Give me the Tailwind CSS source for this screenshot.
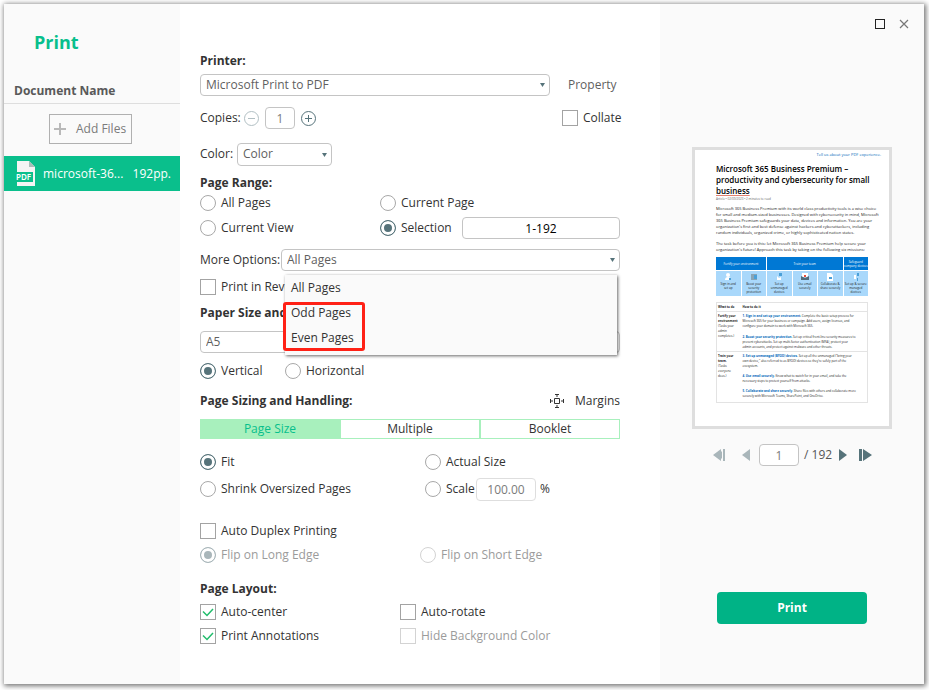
<!DOCTYPE html>
<html lang="en">
 <head>
  <meta charset="utf-8"/>
  <meta content="width=device-width, initial-scale=1.0" name="viewport"/>
  <title>
   Print
  </title>
  <script src="https://cdn.jsdelivr.net/npm/@tailwindcss/browser@4"></script>
 </head>
 <body class="min-h-screen flex bg-white pt-1 pl-1 pr-[5px] pb-[6px] font-['Open_Sans','Noto_Sans',sans-serif] text-xs text-[#333]">
  <div class="flex min-w-0 flex-1 bg-white shadow-[1px_1px_5px_1px_rgba(0,0,0,0.55)]">
   <!-- Documents -->
   <aside class="w-44 shrink-0 bg-[#fafafa]">
    <h1 class="pt-6 pl-[30px] text-lg leading-7 font-bold text-[#07bf8c]">
     Print
    </h1>
    <h2 class="mt-[29px] h-[18px] pl-[10px] leading-3 font-bold text-[#595959]">
     Document Name
    </h2>
    <div class="border-t border-[#dedede] pt-[10px] pb-3">
     <button class="ml-[45px] flex h-[30px] w-[83px] items-center gap-[10px] border border-[#b0b0b0] pl-1 whitespace-nowrap text-[#7b7b7b]">
      <svg class="size-3 shrink-0" fill="none" stroke="#b9b9b9" stroke-width="2" viewBox="0 0 12 12">
       <path d="M6 0v12M0 6h12"/>
      </svg>
      Add Files
     </button>
    </div>
    <div class="flex h-[35px] items-center bg-[#0abf8c] pr-[9px] pl-3 text-white">
     <svg class="h-[25px] w-[19px] shrink-0" viewBox="0 0 19 25">
      <path d="M1 0h12l6 6v19H1z" fill="#f4f4f4"/>
      <path d="M13 0l6 6h-6z" fill="#a9bdb8"/>
      <path d="M0 11h17v10H0z" fill="#0abf8c"/>
      <text fill="#fff" font-family="Noto Sans, sans-serif" font-size="8" font-weight="600" x="0" y="19">PDF</text>
     </svg>
     <span class="ml-2 flex-1">microsoft-36...</span>
     <span>192pp.</span>
    </div>
   </aside>
   <!-- Settings -->
   <main class="min-w-0 flex-1 pt-[47px] pr-10 pb-8 pl-5 whitespace-nowrap">
    <label class="block h-5 leading-5 font-bold" for="printer">
     Printer:
    </label>
    <div class="mt-[3px] flex h-[22px] items-center">
     <div class="relative mr-[18px] flex-1">
      <select class="block h-[22px] w-full appearance-none rounded border border-[#c4c4c4] bg-white pl-[5px] text-[#5f5f5f]" id="printer">
       <option>Microsoft Print to PDF</option>
      </select>
      <svg class="pointer-events-none absolute top-[9px] right-[5px] h-1 w-[5px]" fill="#56737a" viewBox="0 0 5 4">
       <path d="M0 0h5L2.500 4z"/>
      </svg>
     </div>
     <a class="w-[52px] text-[#5f5f5f]" href="#">Property</a>
    </div>
    <div class="mt-[10px] flex h-6 items-center">
     <label class="w-[44px]" for="copies">Copies:</label>
     <button aria-label="Fewer copies">
      <svg class="size-[15px]" fill="none" stroke="#b1bfc3" viewBox="0 0 15 15">
       <circle cx="7.500" cy="7.500" r="7"/>
       <path d="M4 7.500h7"/>
      </svg>
     </button>
     <input class="mx-[6px] h-[22px] w-[30px] rounded border border-[#c4c4c4] text-center text-[#7b7b7b]" id="copies" type="text" value="1"/>
     <button aria-label="More copies">
      <svg class="size-[15px]" fill="none" stroke="#56737a" viewBox="0 0 15 15">
       <circle cx="7.500" cy="7.500" r="7"/>
       <path d="M4 7.500h7M7.500 4v7"/>
      </svg>
     </button>
     <label class="ml-auto flex w-[58px] items-center gap-[5px]">
      <input class="size-4 shrink-0 appearance-none border border-[#a3a3a3] bg-white" type="checkbox"/>
      Collate
     </label>
    </div>
    <div class="mt-3 flex h-6 items-center">
     <label class="w-[37px]" for="color">Color:</label>
     <div class="relative">
      <select class="block h-[23px] w-[95px] appearance-none rounded border border-[#c4c4c4] bg-white pl-[5px] text-[#5f5f5f]" id="color">
       <option>Color</option>
      </select>
      <svg class="pointer-events-none absolute top-[10px] right-[5px] h-1 w-[5px]" fill="#56737a" viewBox="0 0 5 4">
       <path d="M0 0h5L2.500 4z"/>
      </svg>
     </div>
    </div>
    <h3 class="mt-[7px] h-5 leading-5 font-bold">
     Page Range:
    </h3>
    <div class="flex h-5 items-center">
     <label class="flex w-[180px] items-center gap-[5px]">
      <input class="size-4 appearance-none rounded-full border border-[#a8a8a8] bg-white" name="range" type="radio"/>
      All Pages
     </label>
     <label class="flex items-center gap-[5px]">
      <input class="size-4 appearance-none rounded-full border border-[#a8a8a8] bg-white" name="range" type="radio"/>
      Current Page
     </label>
    </div>
    <div class="mt-1 flex h-[22px] items-center">
     <label class="flex w-[180px] items-center gap-[5px]">
      <input class="size-4 appearance-none rounded-full border border-[#a8a8a8] bg-white" name="range" type="radio"/>
      Current View
     </label>
     <label class="flex w-[82px] items-center gap-[5px]">
      <input checked class="size-4 appearance-none rounded-full border border-[#a8a8a8] checked:border-[#56737a] checked:bg-[#56737a] checked:shadow-[inset_0_0_0_3px_#fff]" name="range" type="radio"/>
      Selection
     </label>
     <input aria-label="Selected pages" class="h-[22px] w-0 min-w-0 flex-1 rounded border border-[#c4c4c4] text-center text-black" type="text" value="1-192"/>
    </div>
    <div class="mt-[10px] flex h-[22px] items-center">
     <label class="w-[81px]" for="more">More Options:</label>
     <div class="relative flex-1">
      <select class="block h-[22px] w-full appearance-none rounded border border-[#c4c4c4] bg-white pl-[5px] text-[#5f5f5f]" id="more">
       <option>All Pages</option>
       <option>Odd Pages</option>
       <option>Even Pages</option>
      </select>
      <svg class="pointer-events-none absolute top-[9px] right-[5px] h-1 w-[5px]" fill="#56737a" viewBox="0 0 5 4">
       <path d="M0 0h5L2.500 4z"/>
      </svg>
      <!-- open list -->
      <ul class="absolute top-[26px] right-[3px] left-1 z-10 h-20 bg-[#fafafa] pl-[6px] leading-[25px] shadow-[1px_1px_3px_rgba(0,0,0,0.6)]">
       <li>All Pages</li>
       <li>Odd Pages</li>
       <li>Even Pages</li>
       <li aria-hidden="true" class="absolute top-[27px] -left-[2px] h-[49px] w-[82px] rounded-[3px] border-3 border-[#ff2116]"></li>
      </ul>
     </div>
    </div>
    <label class="mt-[6px] flex h-5 items-center gap-[5px]">
     <input class="size-4 appearance-none border border-[#a3a3a3] bg-white" type="checkbox"/>
     Print in Reve
    </label>
    <label class="mt-[6px] block h-5 leading-5 font-bold" for="paper">
     Paper Size and
    </label>
    <select class="mt-2 block h-[22px] w-full appearance-none rounded border border-[#c4c4c4] bg-white pl-[5px] text-[#5f5f5f]" id="paper">
     <option>A5</option>
    </select>
    <div class="mt-2 flex h-5 items-center">
     <label class="flex w-[85px] items-center gap-[5px]">
      <input checked class="size-4 appearance-none rounded-full border border-[#a8a8a8] checked:border-[#56737a] checked:bg-[#56737a] checked:shadow-[inset_0_0_0_3px_#fff]" name="orientation" type="radio"/>
      Vertical
     </label>
     <label class="flex items-center gap-[5px]">
      <input class="size-4 appearance-none rounded-full border border-[#a8a8a8] bg-white" name="orientation" type="radio"/>
      Horizontal
     </label>
    </div>
    <div class="mt-[10px] flex h-5 items-center justify-between">
     <h3 class="font-bold">
      Page Sizing and Handling:
     </h3>
     <button class="flex items-center gap-[11px]">
      <svg class="size-[14px]" fill="none" stroke="#333" viewBox="0 0 14 14">
       <path d="M4.500 4.500h5v5h-5zM5 .5h4M5 13.500h4M.5 5v4M13.500 5v4M7 1v2M7 11v2M1 7h2M11 7h2"/>
      </svg>
      Margins
     </button>
    </div>
    <div class="mt-2 grid h-5 grid-cols-3 text-center leading-[18px]">
     <button class="border border-[#a8f0bd] bg-[#a8f0bd] text-[#07bf8c]">Page Size</button>
     <button class="border border-[#a8f0bd]">Multiple</button>
     <button class="border border-[#a8f0bd]">Booklet</button>
    </div>
    <div class="mt-[13px] flex h-5 items-center">
     <label class="flex w-[225px] items-center gap-[5px]">
      <input checked class="size-4 appearance-none rounded-full border border-[#a8a8a8] checked:border-[#56737a] checked:bg-[#56737a] checked:shadow-[inset_0_0_0_3px_#fff]" name="scaling" type="radio"/>
      Fit
     </label>
     <label class="flex items-center gap-[5px]">
      <input class="size-4 appearance-none rounded-full border border-[#a8a8a8] bg-white" name="scaling" type="radio"/>
      Actual Size
     </label>
    </div>
    <div class="mt-[5px] flex h-6 items-center">
     <label class="flex w-[225px] items-center gap-[5px]">
      <input class="size-4 appearance-none rounded-full border border-[#a8a8a8] bg-white" name="scaling" type="radio"/>
      Shrink Oversized Pages
     </label>
     <label class="flex w-[51px] items-center gap-[5px]">
      <input class="size-4 appearance-none rounded-full border border-[#a8a8a8] bg-white" name="scaling" type="radio"/>
      Scale
     </label>
     <input aria-label="Scale percent" class="mr-1 h-[23px] w-[60px] rounded border border-[#dedede] text-center text-[#7b7b7b]" type="text" value="100.00"/>
     %
    </div>
    <label class="mt-5 flex h-5 items-center gap-[5px]">
     <input class="size-4 appearance-none border border-[#a3a3a3] bg-white" type="checkbox"/>
     Auto Duplex Printing
    </label>
    <div class="mt-1 flex h-5 items-center text-[#9b9b9b]">
     <label class="flex w-[220px] items-center gap-[5px]">
      <input checked class="size-4 appearance-none rounded-full border border-[#a9b6ba] bg-[#a9b6ba] shadow-[inset_0_0_0_3px_#fff]" disabled name="flip" type="radio"/>
      Flip on Long Edge
     </label>
     <label class="flex items-center gap-[5px]">
      <input class="size-4 appearance-none rounded-full border border-[#d3d3d3] bg-white" disabled name="flip" type="radio"/>
      Flip on Short Edge
     </label>
    </div>
    <h3 class="mt-[14px] h-5 leading-5 font-bold">
     Page Layout:
    </h3>
    <div class="mt-[3px] grid grid-cols-[200px_1fr] gap-y-1">
     <label class="flex h-5 items-center gap-[5px]">
      <span class="relative size-4">
       <input checked class="block size-4 appearance-none border border-[#a3a3a3] bg-white" type="checkbox"/>
       <svg class="pointer-events-none absolute inset-0 size-4" fill="none" stroke="#21bd6c" stroke-width="1.500" viewBox="0 0 16 16">
        <path d="M3 7.500l4 4 6-6.500"/>
       </svg>
      </span>
      Auto-center
     </label>
     <label class="flex h-5 items-center gap-[5px]">
      <input class="size-4 appearance-none border border-[#a3a3a3] bg-white" type="checkbox"/>
      Auto-rotate
     </label>
     <label class="flex h-5 items-center gap-[5px]">
      <span class="relative size-4">
       <input checked class="block size-4 appearance-none border border-[#a3a3a3] bg-white" type="checkbox"/>
       <svg class="pointer-events-none absolute inset-0 size-4" fill="none" stroke="#21bd6c" stroke-width="1.500" viewBox="0 0 16 16">
        <path d="M3 7.500l4 4 6-6.500"/>
       </svg>
      </span>
      Print Annotations
     </label>
     <label class="flex h-5 items-center gap-[5px] text-[#9b9b9b]">
      <input class="size-4 appearance-none border border-[#d3d3d3] bg-white" disabled type="checkbox"/>
      Hide Background Color
     </label>
    </div>
   </main>
   <!-- Preview -->
   <section class="flex w-[264px] shrink-0 flex-col bg-[#fafafa] pt-[10px] pb-[60px]">
    <div class="flex h-5 items-center justify-end gap-[14px] pr-[15px]">
     <button aria-label="Maximize" class="size-[10px] border border-[#222]"></button>
     <button aria-label="Close">
      <svg class="size-[10px]" fill="none" stroke="#777" stroke-width="1.200" viewBox="0 0 10 10">
       <path d="M1 1l8 8M9 1L1 9"/>
      </svg>
     </button>
    </div>
    <article class="mt-[113px] ml-8 h-[282px] w-[200px] border-3 border-[#dedede] bg-white pt-[2px] pl-[21px] text-[3px] leading-[6px] whitespace-nowrap text-[#222]">
     <p class="pr-2 text-right text-[4px] leading-[6px] text-[#0067b8]">
      Tell us about your PDF experience.
     </p>
     <h2 class="mt-[5px] text-[8px] leading-[11px] font-semibold text-black">
      Microsoft 365 Business Premium –<br/>
      productivity and cybersecurity for small<br/>
      <span class="underline decoration-[#e08070]">business</span>
     </h2>
     <p class="text-[#666]">
      Article • 02/09/2023 • 2 minutes to read
     </p>
     <p class="mt-1 text-[4px] leading-[6px]">
      Microsoft 365 Business Premium with its world class productivity tools is a wise choice<br/>
      for small and medium-sized businesses. Designed with cybersecurity in mind, Microsoft<br/>
      365 Business Premium safeguards your data, devices and information. You are your<br/>
      organization's first and best defense against hackers and cyberattackers, including<br/>
      random individuals, organized crime, or highly sophisticated nation states.
     </p>
     <p class="mt-[5px] text-[4px] leading-[6px]">
      The task before you is this: let Microsoft 365 Business Premium help secure your<br/>
      organization's future! Approach this task by taking on the following six missions:
     </p>
     <div class="mt-1 grid w-[152px] grid-cols-6 gap-px text-center leading-[4px]">
      <div class="col-span-2 flex h-[13px] items-center justify-center bg-[#0078d4] text-white">Fortify your environment</div>
      <div class="col-span-3 flex h-[13px] items-center justify-center bg-[#0078d4] text-white">Train your team</div>
      <div class="flex h-[13px] items-center justify-center bg-[#0078d4] text-white">Safeguard<br/>company devices</div>
      <div class="h-[25px] bg-[#a9d8fb] pt-[2px]">
       <svg class="mx-auto mb-px size-2" viewBox="0 0 8 8"><circle cx="4" cy="2" fill="#fff" r="2"/><path d="M1 7q0-3 3-3t3 3z" fill="#fff"/><path d="M5 5h2v2H5z" fill="#4ba0d8"/></svg>
       Sign in and<br/>set up
      </div>
      <div class="h-[25px] bg-[#a9d8fb] pt-[2px]">
       <svg class="mx-auto mb-px size-2" viewBox="0 0 8 8"><path d="M1 1h6v6H1z" fill="#8aa5b5"/><path d="M4 2h3v4H4z" fill="#4ba0d8"/></svg>
       Boost your<br/>security<br/>protection
      </div>
      <div class="h-[25px] bg-[#a9d8fb] pt-[2px]">
       <svg class="mx-auto mb-px size-2" viewBox="0 0 8 8"><path d="M4 0h3v3H4z" fill="#4ba0d8"/><path d="M2 3l2 2 2-1v3H2z" fill="#fff"/></svg>
       Set up<br/>unmanaged<br/>devices
      </div>
      <div class="h-[25px] bg-[#a9d8fb] pt-[2px]">
       <svg class="mx-auto mb-px size-2" viewBox="0 0 8 8"><path d="M1 0h6v4H1z" fill="#fff"/><path d="M0 3l4 2 4-2v4H0z" fill="#526b7a"/><path d="M3 2h2v2H3z" fill="#e64b3c"/></svg>
       Use email<br/>securely
      </div>
      <div class="h-[25px] bg-[#a9d8fb] pt-[2px]">
       <svg class="mx-auto mb-px size-2" viewBox="0 0 8 8"><path d="M1 0h4l2 2v6H1z" fill="#fff"/><path d="M3 4h3v2H3z" fill="#4ba0d8"/></svg>
       Collaborate &amp;<br/>share securely
      </div>
      <div class="h-[25px] bg-[#a9d8fb] pt-[2px]">
       <svg class="mx-auto mb-px size-2" viewBox="0 0 8 8"><path d="M2 2h2v4H2z" fill="#fff"/><path d="M5 0h2v3H5zM5 5h1v3H5z" fill="#4ba0d8"/></svg>
       Set up &amp; secure<br/>managed<br/>devices
      </div>
     </div>
     <table class="mt-[6px] w-[152px] border border-[#e3e3e3] text-left align-top leading-[5px]">
      <thead>
       <tr class="h-[9px] border-b border-[#e3e3e3]">
        <th class="w-[26px] pl-px">What to do</th>
        <th>How to do it</th>
       </tr>
      </thead>
      <tbody class="align-top">
       <tr class="h-10 border-b border-[#e3e3e3]">
        <td class="pt-[2px] pl-px"><b>Fortify your<br/>environment</b><br/>(Tasks your<br/>admin<br/>completes.)</td>
        <td class="pt-[2px]">
         <p><a class="font-bold text-[#0067b8]" href="#">1. Sign in and set up your environment.</a> Complete the basic setup process for<br/>Microsoft 365 for your business or campaign. Add users, assign licenses, and<br/>configure your domain to work with Microsoft 365.</p>
         <p class="mt-[6px]"><a class="font-bold text-[#0067b8]" href="#">2. Boost your security protection.</a> Set up critical front-line security measures to<br/>prevent cyberattacks. Set up multi-factor authentication (MFA), protect your<br/>admin accounts, and protect against malware and other threats.</p>
        </td>
       </tr>
       <tr class="h-[51px]">
        <td class="pt-[2px] pl-px"><b>Train your<br/>team.</b><br/>(Tasks<br/>everyone<br/>does.)</td>
        <td class="pt-[2px]">
         <p><a class="font-bold text-[#0067b8]" href="#">3. Set up unmanaged (BYOD) devices.</a> Set up all the unmanaged ("bring your<br/>own device," also referred to as BYOD) devices so they're safely part of the<br/>ecosystem.</p>
         <p class="mt-[5px]"><a class="font-bold text-[#0067b8]" href="#">4. Use email securely.</a> Know what to watch for in your email, and take the<br/>necessary steps to protect yourself from attacks.</p>
         <p class="mt-[5px]"><a class="font-bold text-[#0067b8]" href="#">5. Collaborate and share securely.</a> Share files with others and collaborate more<br/>securely with Microsoft Teams, SharePoint, and OneDrive.</p>
        </td>
       </tr>
      </tbody>
     </table>
    </article>
    <nav class="mt-[15px] ml-[53px] flex h-[22px] items-center">
     <button aria-label="First page">
      <svg class="h-3 w-[13px]" fill="#a9b6ba" viewBox="0 0 13 12"><path d="M0 6l8-6v12zM8 3l1-1v8l-1-1zM10 0h2v12h-2z"/></svg>
     </button>
     <button aria-label="Previous page" class="ml-4">
      <svg class="h-3 w-2" fill="#a9b6ba" viewBox="0 0 8 12"><path d="M0 6l8-6v12z"/></svg>
     </button>
     <input aria-label="Page" class="mr-[5px] ml-[9px] h-[22px] w-10 rounded border border-[#c4c4c4] bg-white text-center text-[#7b7b7b]" type="text" value="1"/>
     <span class="w-[30px] text-[#555]">/ 192</span>
     <button aria-label="Next page" class="ml-[5px]">
      <svg class="h-3 w-2" fill="#56737a" viewBox="0 0 8 12"><path d="M8 6L0 0v12z"/></svg>
     </button>
     <button aria-label="Last page" class="ml-3">
      <svg class="h-3 w-[13px]" fill="#56737a" viewBox="0 0 13 12"><path d="M13 6L4 0v12zM0 0h3v12H0z"/></svg>
     </button>
    </nav>
    <button class="mt-auto ml-[57px] h-8 w-[150px] rounded bg-[#00b386] font-bold text-white">
     Print
    </button>
   </section>
  </div>
 </body>
</html>
